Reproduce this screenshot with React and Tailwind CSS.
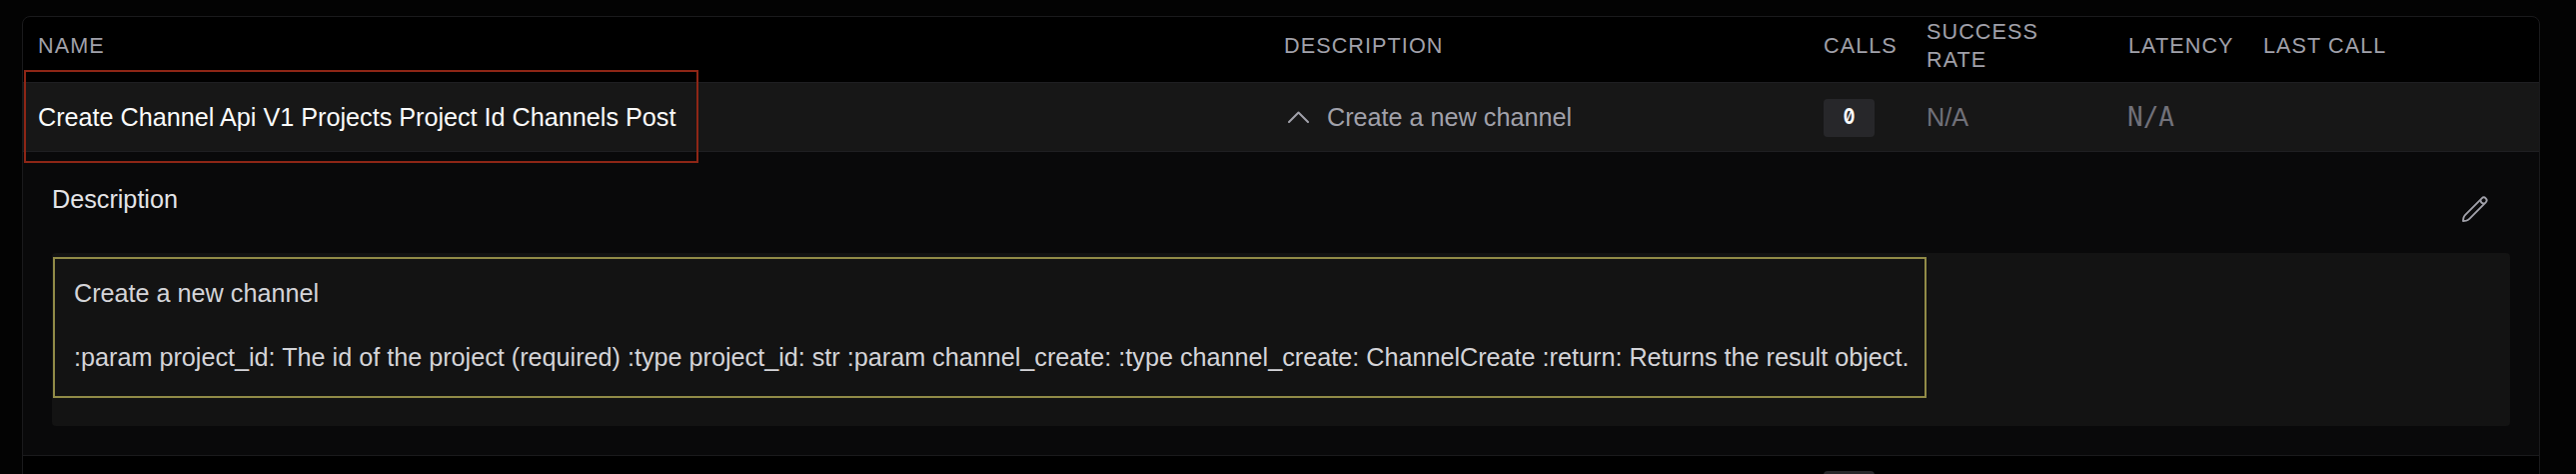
function HeaderCell({ children }) {
  return (
    <div className="text-[21.6px] leading-7 tracking-[1.08px] text-[#a1a1aa] uppercase">
      {children}
    </div>
  );
}

function ChevronUp() {
  return (
    <svg width="21" height="12" viewBox="0 0 21 12" fill="none" stroke="#a1a1aa" strokeWidth="2" strokeLinecap="round" strokeLinejoin="round">
      <path d="M1 11 L10.5 1.5 L20 11" />
    </svg>
  );
}

function Pencil() {
  return (
    <svg width="26" height="26" viewBox="0 0 26 26" fill="none" stroke="#a1a1aa" strokeWidth="1.9" strokeLinejoin="round">
      <path d="M1 25 L1.4 21.9 Q1.8 20.3 3.2 18.9 L19.7 2.3 A2.8 2.8 0 0 1 23.7 6.3 L7.3 22.8 Q5.8 24.3 4.2 24.6 Z" />
      <path d="M18.2 3.9 Q18.6 7.3 22.1 7.8" />
    </svg>
  );
}

const columns =
  "grid grid-cols-[1247px_540px_103px_202px_135px_1fr] items-center pl-[15px]";

export default function App() {
  return (
    <div className="h-[474px] w-[2578px] overflow-hidden bg-[#030303] px-[22px] pt-4 pr-9 font-['Liberation_Sans',Arial,sans-serif]">
      <div className="h-[500px] w-[2520px] overflow-hidden rounded-t-lg border border-[#1a1a1c] bg-black">
        <div className={columns + " h-[65px] pb-[7px]"}>
          <HeaderCell>Name</HeaderCell>
          <HeaderCell>Description</HeaderCell>
          <HeaderCell>Calls</HeaderCell>
          <HeaderCell>Success<br />Rate</HeaderCell>
          <HeaderCell>Latency</HeaderCell>
          <HeaderCell>Last Call</HeaderCell>
        </div>
        <div className={columns + " relative h-[70px] border-y border-[#1f1f22] bg-[#171717] text-[25.2px] leading-9"}>
          <div className="text-[#fafafa]">Create Channel Api V1 Projects Project Id Channels Post</div>
          <div className="flex items-center gap-[18px] pl-1 text-[#a1a1aa]">
            <ChevronUp />
            <span>Create a new channel</span>
          </div>
          <div className="mt-0.5 flex h-[38px] w-[51px] items-center justify-center rounded bg-[#27272a] pb-[5px] font-[Inter,sans-serif] text-[22px] font-bold text-[#fafafa] [font-feature-settings:'zero']">
            <span className="scale-x-[0.78]">0</span>
          </div>
          <div className="text-[#71717a]">N/A</div>
          <div className="-ml-px font-['DejaVu_Sans_Mono',monospace] text-[26px] text-[#71717a]">N/A</div>
          <div />
          <div className="absolute top-[-13px] left-px h-[93px] w-[675px] border-2 border-[#8e2616]" />
        </div>
        <div className="h-[304px] border-b border-[#1a1a1c] bg-[#09090a] px-[29px]">
          <div className="flex h-[101px] items-start justify-between pr-[22px]">
            <h2 className="pt-[29px] text-[25.2px] leading-9 text-[#e4e4e7]">Description</h2>
            <div className="pt-11"><Pencil /></div>
          </div>
          <div className="h-[173px] rounded bg-[#131313] pt-1 pl-px">
            <div className="h-[141px] w-[1875px] border-2 border-[#918b47] pt-[18px] pl-[19px] text-[25.2px] leading-8 whitespace-nowrap text-[#d4d4d8]">
              <p>Create a new channel</p>
              <p className="mt-8">:param project_id: The id of the project (required) :type project_id: str :param channel_create: :type channel_create: ChannelCreate :return: Returns the result object.</p>
            </div>
          </div>
        </div>
        <div className={columns + " pt-[15px]"}>
          <div />
          <div />
          <div className="h-[38px] w-[51px] rounded bg-[#27272a]" />
        </div>
      </div>
    </div>
  );
}
